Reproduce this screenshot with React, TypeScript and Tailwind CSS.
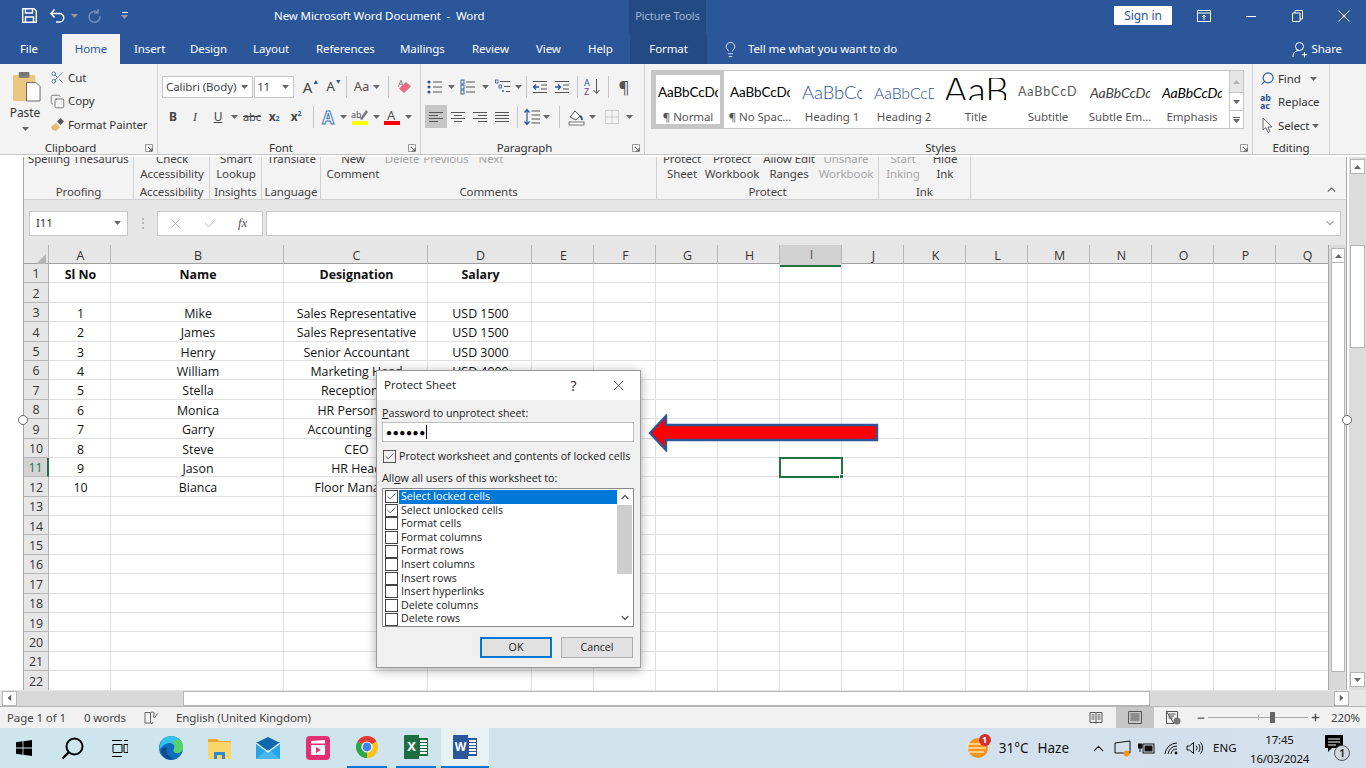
import React from 'react';
import { Check, ChevronDown, ChevronUp, Copy, Lightbulb, Minus, Plus, Scissors, Search, X } from 'lucide-react';

const columns = ['A', 'B', 'C', 'D', 'E', 'F', 'G', 'H', 'I', 'J', 'K', 'L', 'M', 'N', 'O', 'P', 'Q'];
const gridCols = 'grid grid-cols-[25px_62px_173px_144px_104px_62px_62px_62px_62px_62px_62px_62px_62px_62px_62px_62px_62px_62px]';

const sheet: string[][] = [
  ['Sl No', 'Name', 'Designation', 'Salary'],
  [],
  ['1', 'Mike', 'Sales Representative', 'USD 1500'],
  ['2', 'James', 'Sales Representative', 'USD 1500'],
  ['3', 'Henry', 'Senior Accountant', 'USD 3000'],
  ['4', 'William', 'Marketing Head', 'USD 4000'],
  ['5', 'Stella', 'Receptionist', ''],
  ['6', 'Monica', 'HR Personnel', ''],
  ['7', 'Garry', 'Accounting Head', ''],
  ['8', 'Steve', 'CEO', ''],
  ['9', 'Jason', 'HR Head', ''],
  ['10', 'Bianca', 'Floor Manager', ''],
];

const permissions = [
  'Select locked cells',
  'Select unlocked cells',
  'Format cells',
  'Format columns',
  'Format rows',
  'Insert columns',
  'Insert rows',
  'Insert hyperlinks',
  'Delete columns',
  'Delete rows',
];

const styleItems = [
  { sample: 'AaBbCcDdEe', label: '¶ Normal', cls: 'text-[13.5px] text-black', box: 'h-[33px] items-center' },
  { sample: 'AaBbCcDdEe', label: '¶ No Spac...', cls: 'text-[13.5px] text-black', box: 'h-[33px] items-center' },
  { sample: 'AaBbCcDd', label: 'Heading 1', cls: 'text-[18.5px] text-[#2f5496] font-light', box: 'h-[33px] items-center' },
  { sample: 'AaBbCcDd', label: 'Heading 2', cls: 'text-[15.8px] text-[#2f5496] font-light', box: 'h-[33px] items-center' },
  { sample: 'AaB', label: 'Title', cls: 'text-[37px] leading-[37px] translate-y-[8px] inline-block text-black font-light', box: 'h-[22px] mt-[2px] mb-[9px] items-end justify-center' },
  { sample: 'AaBbCcDdEe', label: 'Subtitle', cls: 'text-[12.5px] text-[#595959] tracking-[0.9px]', box: 'h-[33px] items-center' },
  { sample: 'AaBbCcDdEe', label: 'Subtle Em...', cls: 'text-[14px] text-[#404040] italic', box: 'h-[33px] items-center' },
  { sample: 'AaBbCcDdEe', label: 'Emphasis', cls: 'text-[14px] text-black italic', box: 'h-[33px] items-center' },
];

const Caret = ({ className = '' }: { className?: string }) => (
  <svg width="7" height="4" viewBox="0 0 7 4" className={className}>
    <polygon points="0,0 7,0 3.5,4" fill="#666" />
  </svg>
);

const Sep = ({ w = 'w-[8px]' }: { w?: string }) => (
  <div className={`${w} h-[22px] flex justify-center shrink-0`}>
    <div className="w-px h-full bg-[#c6c6c6]" />
  </div>
);

const Slot = ({ w, className = '', children }: { w: string; className?: string; children?: React.ReactNode }) => (
  <div className={`${w} h-[22px] shrink-0 flex items-center justify-center ${className}`}>{children}</div>
);

const Group = ({ w, label, launcher = true, children }: { w: string; label: string; launcher?: boolean; children: React.ReactNode }) => (
  <div className={`${w} h-full shrink-0 flex flex-col border-r border-[#d0d0d0] relative`}>
    <div className="flex-1 min-h-0">{children}</div>
    <div className={`h-[13px] text-center leading-[13px] text-[#333] ${launcher ? 'pr-[16px]' : ''}`}>{label}</div>
    {launcher && (
      <svg width="8" height="8" viewBox="0 0 8 8" className="absolute right-[4px] bottom-[2px]">
        <path d="M0.5 7.5V0.5H7.5V7.5Z" fill="none" stroke="#999" />
        <path d="M3 3L7 7M7 4V7H4" fill="none" stroke="#555" />
      </svg>
    )}
  </div>
);

const Lines = ({ kind }: { kind: 'left' | 'center' | 'right' | 'justify' }) => {
  const spans: Record<string, number[][]> = {
    left: [[1, 15], [1, 10], [1, 15], [1, 10]],
    center: [[1, 15], [4, 12], [1, 15], [4, 12]],
    right: [[1, 15], [6, 15], [1, 15], [6, 15]],
    justify: [[1, 15], [1, 15], [1, 15], [1, 15]],
  };
  return (
    <svg width="16" height="14" viewBox="0 0 16 14">
      {spans[kind].map((s, i) => (
        <line key={i} x1={s[0]} x2={s[1]} y1={2.5 + i * 3} y2={2.5 + i * 3} stroke="#555" />
      ))}
    </svg>
  );
};

const ListIcon = ({ kind }: { kind: 'bullet' | 'number' | 'multi' }) => (
  <svg width="16" height="16" viewBox="0 0 16 16">
    {kind === 'bullet' &&
      [3, 8, 13].map((y) => (
        <g key={y}>
          <circle cx="2" cy={y} r="1.6" fill="#2b579a" />
          <line x1="6" x2="15" y1={y} y2={y} stroke="#555" />
        </g>
      ))}
    {kind === 'number' &&
      [3, 8, 13].map((y) => (
        <g key={y}>
          <rect x="1" y={y - 2} width="3" height="4" fill="none" stroke="#2b579a" strokeWidth="0.9" />
          <line x1="6" x2="15" y1={y} y2={y} stroke="#555" />
        </g>
      ))}
    {kind === 'multi' && (
      <g>
        <rect x="0.5" y="1" width="2.5" height="3" fill="none" stroke="#2b579a" strokeWidth="0.8" />
        <line x1="5" x2="15" y1="2.5" y2="2.5" stroke="#555" />
        <rect x="4" y="6" width="2.5" height="3" fill="none" stroke="#2b579a" strokeWidth="0.8" />
        <line x1="9" x2="15" y1="7.5" y2="7.5" stroke="#555" />
        <circle cx="8" cy="12" r="0.9" fill="#2b579a" />
        <line x1="11" x2="15" y1="12.5" y2="12.5" stroke="#555" />
      </g>
    )}
  </svg>
);

const Indent = ({ out }: { out?: boolean }) => (
  <svg width="16" height="14" viewBox="0 0 16 14">
    {[1.5, 12.5].map((y) => (
      <line key={y} x1="1" x2="15" y1={y} y2={y} stroke="#555" />
    ))}
    <line x1="9" x2="15" y1="5" y2="5" stroke="#555" />
    <line x1="9" x2="15" y1="9" y2="9" stroke="#555" />
    {out ? (
      <path d="M7 7H1.5M4 4.5L1.5 7L4 9.5" fill="none" stroke="#2b579a" strokeWidth="1.3" />
    ) : (
      <path d="M1 7H6.5M4 4.5L6.5 7L4 9.5" fill="none" stroke="#2b579a" strokeWidth="1.3" />
    )}
  </svg>
);

const ClipboardGroup = () => (
  <div className="flex h-full">
    <div className="w-[50px] flex flex-col items-center pt-[7px]">
      <svg width="29" height="31" viewBox="0 0 30 32" className="ml-[3px]">
        <rect x="1" y="4" width="23" height="27" rx="1" fill="#eac681" />
        <rect x="7" y="1" width="11" height="6" rx="1" fill="#777" />
        <path d="M15 12H25L29 16V31H15Z" fill="#fff" stroke="#666" />
      </svg>
      <span className="text-[12px] leading-[16px] mt-[3px] text-[#333]">Paste</span>
      <Caret className="mt-[6px]" />
    </div>
    <div className="flex flex-col pt-[2px] text-[#333]">
      <div className="h-[23px] flex items-center gap-[3px]">
        <Scissors size={15} strokeWidth={1.3} className="text-[#3f6ea5]" />
        <span>Cut</span>
      </div>
      <div className="h-[24px] flex items-center gap-[3px]">
        <Copy size={15} strokeWidth={1.2} className="text-[#555]" />
        <span>Copy</span>
      </div>
      <div className="h-[23px] flex items-center gap-[3px]">
        <svg width="15" height="15" viewBox="0 0 15 15">
          <path d="M1 10L6 6L10 10L6 14L4 13L3 14Z" fill="#e8b96a" />
          <rect x="8" y="2" width="5" height="5" transform="rotate(45 10.5 4.5)" fill="#555" />
        </svg>
        <span>Format Painter</span>
      </div>
    </div>
  </div>
);

const FontGroup = () => (
  <div className="pl-[4px] pt-[12px]">
    <div className="flex items-center h-[22px]">
      <div className="w-[94px] h-[22px] bg-white border border-[#c6c6c6] flex items-center justify-between pl-[3px] pr-[4px] text-[#444]">
        <span>Calibri (Body)</span>
        <Caret />
      </div>
      <div className="w-[41px] h-[22px] ml-px bg-white border border-[#c6c6c6] flex items-center justify-between pl-[2px] pr-[4px] text-[#444]">
        <span>11</span>
        <Caret />
      </div>
      <Slot w="w-[24px]" className="ml-[5px] text-[15px] text-[#444]">
        A<span className="text-[7px] text-[#2b579a] -mt-[10px]">▲</span>
      </Slot>
      <Slot w="w-[22px]" className="text-[13px] text-[#444]">
        A<span className="text-[7px] text-[#2b579a] -mt-[10px]">▼</span>
      </Slot>
      <Sep w="w-[3px]" />
      <Slot w="w-[38px]" className="gap-[4px] text-[13px] text-[#555]">
        Aa
        <Caret />
      </Slot>
      <Sep w="w-[4px]" />
      <Slot w="w-[30px]">
        <svg width="16" height="16" viewBox="0 0 16 16">
          <text x="1" y="8" fontSize="9" fill="#777">A</text>
          <path d="M7 14L2 9.5L9 3L14 7.5Z" fill="#ea6b7e" />
        </svg>
      </Slot>
    </div>
    <div className="flex items-center h-[22px] mt-[8px] text-[#444]">
      <Slot w="w-[22px]" className="font-bold text-[12px]">B</Slot>
      <Slot w="w-[22px]" className="italic text-[12px] font-['Liberation_Serif',serif]">I</Slot>
      <Slot w="w-[24px]" className="underline text-[12px]">U</Slot>
      <Slot w="w-[9px]"><Caret /></Slot>
      <Slot w="w-[26px]" className="line-through text-[11px]">abc</Slot>
      <Slot w="w-[18px]" className="font-bold text-[12px]">x<sub className="text-[7px] text-[#2b579a]">2</sub></Slot>
      <Slot w="w-[26px]" className="font-bold text-[12px]">x<sup className="text-[7px] text-[#2b579a]">2</sup></Slot>
      <Sep w="w-[8px]" />
      <Slot w="w-[22px]" className="text-[17px] leading-none text-white [-webkit-text-stroke:1px_#3f77b5] font-bold">A</Slot>
      <Slot w="w-[9px]"><Caret /></Slot>
      <Slot w="w-[24px]">
        <svg width="18" height="18" viewBox="0 0 18 18">
          <text x="0" y="10" fontSize="9" fill="#555">ab</text>
          <path d="M9 11L15 2L17 4L11 12Z" fill="#777" />
          <rect x="1" y="13" width="16" height="4" fill="#ffff00" />
        </svg>
      </Slot>
      <Slot w="w-[8px]"><Caret /></Slot>
      <Slot w="w-[24px]">
        <svg width="17" height="18" viewBox="0 0 17 18">
          <text x="3" y="12" fontSize="13" fill="#555">A</text>
          <rect x="0" y="13" width="16" height="4" fill="#ff0000" />
        </svg>
      </Slot>
      <Slot w="w-[9px]"><Caret /></Slot>
    </div>
  </div>
);

const ParagraphGroup = () => (
  <div className="pl-[4px] pt-[12px]">
    <div className="flex items-center h-[22px]">
      <Slot w="w-[19px]"><ListIcon kind="bullet" /></Slot>
      <Slot w="w-[14px]"><Caret /></Slot>
      <Slot w="w-[20px]"><ListIcon kind="number" /></Slot>
      <Slot w="w-[14px]"><Caret /></Slot>
      <Slot w="w-[22px]"><ListIcon kind="multi" /></Slot>
      <Slot w="w-[9px]"><Caret /></Slot>
      <Sep w="w-[6px]" />
      <Slot w="w-[22px]"><Indent out /></Slot>
      <Slot w="w-[22px]"><Indent /></Slot>
      <Sep w="w-[9px]" />
      <Slot w="w-[22px]">
        <svg width="18" height="18" viewBox="0 0 18 18">
          <text x="0" y="8" fontSize="9" fill="#2b579a">A</text>
          <text x="0" y="17" fontSize="9" fill="#7a3e9d">Z</text>
          <path d="M12.5 1V15M9.5 12L12.5 15.5L15.5 12" fill="none" stroke="#555" />
        </svg>
      </Slot>
      <Sep w="w-[9px]" />
      <Slot w="w-[22px]" className="text-[17px] text-[#555]">¶</Slot>
    </div>
    <div className="flex items-center h-[23px] mt-[7px]">
      <Slot w="w-[22px]" className="h-[23px] bg-[#c6c6c6]"><Lines kind="left" /></Slot>
      <Slot w="w-[22px]"><Lines kind="center" /></Slot>
      <Slot w="w-[22px]"><Lines kind="right" /></Slot>
      <Slot w="w-[22px]"><Lines kind="justify" /></Slot>
      <Sep />
      <Slot w="w-[21px]">
        <svg width="16" height="18" viewBox="0 0 16 18">
          <path d="M3 2V16M0.5 4.5L3 1.5L5.5 4.5M0.5 13.5L3 16.5L5.5 13.5" fill="none" stroke="#2b579a" strokeWidth="1.2" />
          {[3, 7, 11, 15].map((y) => (
            <line key={y} x1="7.5" x2="16" y1={y} y2={y} stroke="#555" />
          ))}
        </svg>
      </Slot>
      <Slot w="w-[9px]"><Caret /></Slot>
      <Sep w="w-[16px]" />
      <Slot w="w-[18px]">
        <svg width="17" height="18" viewBox="0 0 17 18">
          <path d="M2 9L7 3L12 8L8 12Z" fill="#fff" stroke="#555" />
          <path d="M12 8C14 9 14 11 14 12" fill="none" stroke="#2b579a" strokeWidth="2" />
          <rect x="1" y="14" width="15" height="3" fill="#fff" stroke="#777" />
        </svg>
      </Slot>
      <Slot w="w-[14px]"><Caret /></Slot>
      <Slot w="w-[22px]" className="ml-[2px]">
        <svg width="14" height="14" viewBox="0 0 14 14">
          <path d="M0.5 0.5H13.5V13.5H0.5ZM7 0.5V13.5M0.5 7H13.5" fill="none" stroke="#aaa" strokeDasharray="1 1" />
        </svg>
      </Slot>
      <Slot w="w-[12px]"><Caret /></Slot>
    </div>
  </div>
);

const StylesGroup = () => (
  <div className="pt-[6px]">
    <div className="w-[593px] h-[59px] bg-white border border-[#c6c6c6] flex">
      <div className="flex-1 flex overflow-hidden">
        {styleItems.map((item, i) => (
          <div
            key={item.label}
            className={`w-[72px] shrink-0 h-full flex flex-col items-center ${i === 0 ? 'border-[4px] border-[#c6c6c6] pt-[1px]' : 'pt-[5px] px-[4px]'}`}
          >
            <div className={`w-[60px] shrink-0 overflow-hidden flex font-['Lato',sans-serif] whitespace-nowrap ${item.box}`}>
              <span className={item.cls}>{item.sample}</span>
            </div>
            <div className="leading-[16px] text-[#555] whitespace-nowrap">{item.label}</div>
          </div>
        ))}
      </div>
      <div className="w-[14px] shrink-0 flex flex-col border-l border-[#c6c6c6]">
        <div className="h-[21px] bg-[#e6e6e6] flex items-center justify-center"><Caret className="rotate-180 opacity-40" /></div>
        <div className="h-[19px] border-y border-[#c6c6c6] flex items-center justify-center"><Caret /></div>
        <div className="flex-1 flex flex-col items-center justify-center gap-[1px]">
          <div className="w-[7px] h-px bg-[#666]" />
          <Caret />
        </div>
      </div>
    </div>
  </div>
);

const EditingGroup = () => (
  <div className="pl-[7px] pt-[3px] text-[#333]">
    <div className="h-[23px] flex items-center gap-[3px]">
      <Search size={15} strokeWidth={1.8} className="text-[#2b579a] -scale-x-100" />
      <span>Find</span>
      <Caret className="ml-[6px]" />
    </div>
    <div className="h-[24px] flex items-center gap-[2px]">
      <span className="w-[16px] text-[9px] leading-[8px] font-bold text-[#2b579a]">ab<br />ac</span>
      <span>Replace</span>
    </div>
    <div className="h-[23px] flex items-center gap-[3px]">
      <svg width="15" height="17" viewBox="0 0 15 17">
        <path d="M3 1V13L6 10.5L8 15.5L10 14.5L8 10H12Z" fill="#fff" stroke="#666" />
      </svg>
      <span>Select</span>
      <Caret />
    </div>
  </div>
);

const MiniGroup = ({ w, label, items }: { w: string; label: string; items: { w: string; a: string; b?: string; off?: boolean }[] }) => (
  <div className={`${w} shrink-0 h-full flex flex-col border-r border-[#d0d0d0]`}>
    <div className="h-[27px] flex overflow-hidden">
      {items.map((it) => (
        <div key={it.a} className={`${it.w} shrink-0 flex flex-col items-center -mt-[6px] leading-[15px] ${it.off ? 'text-[#a6a6a6]' : 'text-[#444]'}`}>
          <div>{it.a}</div>
          <div>{it.b}</div>
        </div>
      ))}
    </div>
    <div className="text-center leading-[15px] mt-[1px] text-[#444]">{label}</div>
  </div>
);

const ExcelRibbon = () => (
  <div className="h-[43px] bg-[#f3f3f3] border-b border-[#d0d0d0] flex whitespace-nowrap overflow-hidden">
    <MiniGroup w="w-[110px]" label="Proofing" items={[{ w: 'w-[50px]', a: 'Spelling' }, { w: 'w-[54px]', a: 'Thesaurus' }]} />
    <MiniGroup w="w-[76px]" label="Accessibility" items={[{ w: 'w-[76px]', a: 'Check', b: 'Accessibility' }]} />
    <MiniGroup w="w-[52px]" label="Insights" items={[{ w: 'w-[52px]', a: 'Smart', b: 'Lookup' }]} />
    <MiniGroup w="w-[59px]" label="Language" items={[{ w: 'w-[59px]', a: 'Translate' }]} />
    <MiniGroup
      w="w-[336px]"
      label="Comments"
      items={[
        { w: 'w-[64px]', a: 'New', b: 'Comment' },
        { w: 'w-[34px]', a: 'Delete', off: true },
        { w: 'w-[54px]', a: 'Previous', off: true },
        { w: 'w-[36px]', a: 'Next', off: true },
      ]}
    />
    <MiniGroup
      w="w-[222px]"
      label="Protect"
      items={[
        { w: 'w-[50px]', a: 'Protect', b: 'Sheet' },
        { w: 'w-[50px]', a: 'Protect ', b: 'Workbook' },
        { w: 'w-[64px]', a: 'Allow Edit', b: 'Ranges' },
        { w: 'w-[50px]', a: 'Unshare', b: 'Workbook', off: true },
      ]}
    />
    <MiniGroup
      w="w-[92px]"
      label="Ink"
      items={[
        { w: 'w-[48px]', a: 'Start', b: 'Inking', off: true },
        { w: 'w-[36px]', a: 'Hide', b: 'Ink' },
      ]}
    />
    <div className="flex-1 flex items-end justify-end pr-[8px] pb-[3px]">
      <ChevronUp size={13} strokeWidth={2.5} className="text-[#666]" />
    </div>
  </div>
);

const FormulaBar = () => (
  <div className="h-[45px] bg-[#e6e6e6] flex items-center pl-[5px] pr-[5px] pt-[1px]">
    <div className="w-[99px] h-[25px] bg-white border border-[#c6c6c6] flex items-center justify-between pl-[6px] pr-[6px] text-[#333]">
      <span>I11</span>
      <Caret />
    </div>
    <div className="w-[29px] flex justify-center text-[#999] text-[12px] leading-none">⋮</div>
    <div className="w-[106px] h-[25px] bg-white border border-[#c6c6c6] flex items-center pl-[10px] gap-[20px]">
      <X size={15} strokeWidth={1.3} className="text-[#aaa]" />
      <Check size={15} strokeWidth={1.3} className="text-[#aaa]" />
      <span className="font-['Liberation_Serif',serif] italic text-[13px] text-[#555]">fx</span>
    </div>
    <div className="flex-1 h-[25px] ml-[3px] bg-white border border-[#c6c6c6] flex items-center justify-end pr-[3px]">
      <ChevronDown size={14} strokeWidth={2} className="text-[#aaa]" />
    </div>
  </div>
);

const Sheet = () => (
  <div className="flex-1 min-h-0 flex bg-[#e6e6e6]">
    <div className="w-[1304px] shrink-0 overflow-hidden font-['Open_Sans',sans-serif] text-[12.4px] tracking-normal">
      <div className={`${gridCols} h-[19px] bg-[#e6e6e6] text-[#333] border-b border-[#9f9f9f]`}>
        <div className="border-r border-[#b5b5b5] flex items-end justify-end p-[2px]">
          <div className="w-0 h-0 border-l-[11px] border-l-transparent border-b-[11px] border-b-[#b5b5b5]" />
        </div>
        {columns.map((c) => (
          <div
            key={c}
            className={`border-r border-[#b5b5b5] pl-[2px] pt-[1px] flex items-center justify-center ${c === 'I' ? 'bg-[#d2d2d2] border-b-2 border-b-[#217346] text-[#555]' : ''}`}
          >
            {c}
          </div>
        ))}
      </div>
      {Array.from({ length: 22 }, (_, r) => {
        const row = sheet[r] || [];
        const isActive = r === 10;
        return (
          <div key={r} className={`${gridCols} h-[19.4px] bg-white text-[#111] leading-none`}>
            <div
              className={`border-b border-r border-[#b5b5b5] pt-[3px] flex items-center justify-center ${
                isActive ? 'bg-[#d2d2d2] border-r-2 border-r-[#217346] text-[#217346]' : 'bg-[#e6e6e6] text-[#333]'
              }`}
            >
              {r + 1}
            </div>
            {columns.map((c, i) => (
              <div
                key={c}
                className={`border-b border-r border-[#e0e0e0] pt-[4px] pl-[2px] flex items-center justify-center whitespace-nowrap ${
                  r === 0 ? 'font-bold' : ''
                } ${isActive && c === 'I' ? 'relative outline-2 -outline-offset-1 outline-[#217346]' : ''}`}
              >
                {row[i]}
                {isActive && c === 'I' && (
                  <span className="absolute -right-[3px] -bottom-[3px] w-[5px] h-[5px] bg-[#217346] border border-white" />
                )}
              </div>
            ))}
          </div>
        );
      })}
    </div>
    <div className="w-[3px] shrink-0 bg-[#d9d9d9] border-l border-[#a6a6a6]" />
    <div className="w-[14px] shrink-0 pt-[3px] flex flex-col bg-[#d9d9d9]">
      <div className="h-[15px] bg-white border border-[#b5b5b5] flex items-center justify-center"><Caret className="rotate-180" /></div>
      <div className="h-[409px] bg-white border border-t-0 border-[#b5b5b5]" />
    </div>
  </div>
);

const WordScroll = () => (
  <div className="w-[17px] shrink-0 bg-[#dcdcdc] flex flex-col pl-px pr-px pt-[2px]">
    <div className="h-[15px] bg-white border border-[#b5b5b5] flex items-center justify-center"><Caret className="rotate-180" /></div>
    <div className="h-[71px]" />
    <div className="h-[103px] bg-white border border-[#b5b5b5]" />
    <div className="flex-1" />
    <div className="h-[15px] mb-[3px] bg-white border border-[#b5b5b5] flex items-center justify-center"><Caret /></div>
  </div>
);

const HorizontalScroll = () => (
  <div className="h-[17px] bg-[#e6e6e6] flex items-center pl-[2px] border-b border-[#b5b5b5]">
    <div className="w-[15px] h-[15px] bg-white border border-[#b5b5b5] flex items-center justify-center"><Caret className="rotate-90" /></div>
    <div className="w-[166px] h-[15px] bg-[#d9d9d9]" />
    <div className="w-[967px] h-[15px] bg-white border border-[#b5b5b5]" />
    <div className="w-[184px] h-[15px] bg-[#d9d9d9]" />
    <div className="w-[15px] h-[15px] bg-white border border-[#b5b5b5] flex items-center justify-center"><Caret className="-rotate-90" /></div>
  </div>
);

const StatusBar = () => (
  <div className="h-[21px] bg-[#f1f1f1] flex items-center text-[#444] whitespace-nowrap">
    <span className="ml-[7px] w-[77px]">Page 1 of 1</span>
    <span className="w-[60px]">0 words</span>
    <svg width="14" height="14" viewBox="0 0 14 14">
      <path d="M1 1.5H6.5V12H1ZM6.5 1.5C8 1 9 1 10 1.5V5M6.5 12L8 13L9 11" fill="none" stroke="#666" />
      <path d="M9 5L10.5 7L13.5 2.5" fill="none" stroke="#666" />
    </svg>
    <span className="ml-[18px]">English (United Kingdom)</span>
    <div className="flex-1" />
    <svg width="14" height="13" viewBox="0 0 14 13" className="mr-[13px]">
      <path d="M1 1.5H6.5L7 2.5L7.5 1.5H13V11.5H7.5L7 12.5L6.5 11.5H1ZM7 2.5V12M2.5 4H5.5M2.5 6H5.5M2.5 8H5.5M8.5 4H11.5M8.5 6H11.5M8.5 8H11.5" fill="none" stroke="#555" />
    </svg>
    <div className="w-[38px] h-full bg-[#c6c6c6] flex items-center justify-center">
      <svg width="14" height="13" viewBox="0 0 14 13">
        <path d="M0.5 0.5H13.5V12.5H0.5ZM2.5 3H11.5M2.5 5H11.5M2.5 7H11.5M2.5 9H11.5" fill="none" stroke="#555" />
      </svg>
    </div>
    <svg width="15" height="14" viewBox="0 0 15 14" className="ml-[12px]">
      <path d="M0.5 0.5H11.5V7M8 12.5H0.5V0.5ZM2.5 3H9.5M2.5 5H8M2.5 7H7" fill="none" stroke="#555" />
      <circle cx="11" cy="10" r="3.5" fill="#777" />
    </svg>
    <Minus size={10} strokeWidth={3} className="ml-[15px] text-[#555]" />
    <div className="ml-[2px] w-[100px] h-[9px] relative flex items-center">
      <div className="w-full h-px bg-[#aaa]" />
      <div className="absolute left-[50px] w-px h-[5px] bg-[#aaa]" />
      <div className="absolute left-[62px] w-[5px] h-[11px] bg-[#666]" />
    </div>
    <Plus size={11} strokeWidth={3} className="ml-[2px] text-[#555]" />
    <span className="ml-[10px] w-[35px]">220%</span>
  </div>
);

const TaskIcon = ({ w, active, children }: { w: string; active?: boolean; children: React.ReactNode }) => (
  <div className={`${w} h-full shrink-0 flex items-center justify-center border-b-[2px] border-[#0078d7] ${active ? 'bg-white/50' : ''}`}>
    {children}
  </div>
);

const Taskbar = () => (
  <div className="h-[40px] bg-gradient-to-r from-[#cde6ee] to-[#d4dfec] flex items-center text-[#111] whitespace-nowrap tracking-normal">
    <div className="w-[48px] flex justify-center">
      <svg width="16" height="16" viewBox="0 0 16 16">
        <path d="M0 2.2L6.6 1.3V7.6H0ZM7.4 1.2L16 0V7.6H7.4ZM0 8.4H6.6V14.7L0 13.8ZM7.4 8.4H16V16L7.4 14.8Z" fill="#000" />
      </svg>
    </div>
    <div className="w-[48px] flex justify-center">
      <svg width="23" height="23" viewBox="0 0 23 23">
        <circle cx="13.5" cy="9.5" r="8" fill="none" stroke="#000" strokeWidth="2" />
        <line x1="8" y1="15" x2="1.5" y2="21.5" stroke="#000" strokeWidth="2.4" />
      </svg>
    </div>
    <div className="w-[48px] flex justify-center">
      <svg width="16" height="17" viewBox="0 0 16 17">
        <path d="M0 0.5H10M0 16.5H10M12 0.5H16M1 4.5H10V12.5H1ZM12 4.5H16V12.5H12Z" fill="none" stroke="#000" />
      </svg>
    </div>
    <div className="w-[47px] flex justify-center ml-[3px]">
      <svg width="24" height="24" viewBox="0 0 24 24">
        <circle cx="12" cy="12" r="12" fill="#0c6fbd" />
        <path d="M12 0C19 0 24 5 24 12C24 15 21 17 18 17C15 17 14 15 15 13C17 9 12 6 8 7.5C5 8.5 2 11 0.5 14C0 6 5 0 12 0Z" fill="#35c1f1" />
        <path d="M22 4.5C24 8 24 12 24 12C24 15 21 17 18 17C15 17 14 15 15 13C17 11 15 8 13 7C17 3 20 3 22 4.5Z" fill="#54d36a" />
        <path d="M8 12C6 16 9 21 15 23C9 25 3 21 2 15C3 12 6 10 8 12Z" fill="#114a8b" />
      </svg>
    </div>
    <div className="w-[49px] ml-px flex justify-center">
      <svg width="23" height="21" viewBox="0 0 23 21">
        <path d="M0 1H9L11 3H23V6H0Z" fill="#e6a92e" />
        <rect y="4" width="23" height="17" rx="1" fill="#fbd56b" />
        <path d="M6 14H17V21H14V17H9V21H6Z" fill="#2f88d6" />
      </svg>
    </div>
    <div className="w-[48px] flex justify-center">
      <svg width="24" height="22" viewBox="0 0 24 22">
        <rect y="5" width="24" height="17" fill="#29a3e3" />
        <path d="M0 6L12 0L24 6L12 14Z" fill="#0f67ac" />
        <path d="M0 22L12 12L24 22Z" fill="#45b6ee" />
        <path d="M0 6L12 15L24 6" fill="none" stroke="#fff" strokeWidth="1.2" />
      </svg>
    </div>
    <div className="w-[49px] ml-px flex justify-center">
      <svg width="24" height="24" viewBox="0 0 24 24">
        <rect width="24" height="24" rx="4" fill="#e42f74" />
        <rect x="5" y="9" width="14" height="10" rx="1" fill="#fff" />
        <path d="M5 5L19 4V7.5H5Z" fill="#fff" />
        <path d="M10 11V17L15 14Z" fill="#e42f74" />
      </svg>
    </div>
    <div className="ml-[5px]" />
    <TaskIcon w="w-[40px]">
      <svg width="24" height="24" viewBox="0 0 24 24">
        <path d="M12 12L2.47 6.5A11 11 0 0 1 21.53 6.5Z" fill="#e33b2e" />
        <path d="M12 12L21.53 6.5A11 11 0 0 1 12 23Z" fill="#fbc116" />
        <path d="M12 12L12 23A11 11 0 0 1 2.47 6.5Z" fill="#2ea64a" />
        <circle cx="12" cy="12" r="5.6" fill="#fff" />
        <circle cx="12" cy="12" r="4.4" fill="#3b82f0" />
      </svg>
    </TaskIcon>
    <div className="ml-[9px]" />
    <TaskIcon w="w-[40px]">
      <div className="flex items-center h-[24px]">
        <div className="w-[15px] h-[24px] bg-[#1d6f42] text-white font-bold text-[13px] flex items-center justify-center rounded-l-[1px]">X</div>
        <div className="w-[9px] h-[18px] border border-[#1d6f42] bg-[repeating-linear-gradient(0deg,#1d6f42_0px,#1d6f42_1px,#fff_1px,#fff_3px)]" />
      </div>
    </TaskIcon>
    <div className="ml-[5px]" />
    <TaskIcon w="w-[48px]" active>
      <div className="flex items-center h-[24px]">
        <div className="w-[15px] h-[24px] bg-[#2b579a] text-white font-bold text-[12px] flex items-center justify-center rounded-l-[1px]">W</div>
        <div className="w-[9px] h-[18px] border border-[#2b579a] bg-[repeating-linear-gradient(0deg,#2b579a_0px,#2b579a_1px,#fff_1px,#fff_3px)]" />
      </div>
    </TaskIcon>
    <div className="flex-1" />
    <div className="relative w-[24px] h-[24px] mr-[9px]">
      <svg width="24" height="24" viewBox="0 0 24 24">
        <circle cx="12" cy="12" r="10" fill="#f7941d" />
        <path d="M0 8H16M1 12H20M3 16H18" stroke="#fde3a7" strokeWidth="1.6" />
      </svg>
      <span className="absolute -top-[2px] -right-[1px] w-[12px] h-[12px] rounded-full bg-[#d32f2f] text-white text-[9px] leading-[12px] text-center font-bold">1</span>
    </div>
    <span className="text-[13.5px] mr-[9px]">31°C</span>
    <span className="text-[13.5px] mr-[21px]">Haze</span>
    <ChevronUp size={17} strokeWidth={1.5} className="mr-[7px]" />
    <svg width="17" height="17" viewBox="0 0 17 17" className="mr-[7px]">
      <path d="M1 3L16 1V13H1Z" fill="none" stroke="#111" />
      <circle cx="12.5" cy="13.5" r="3" fill="#f7931e" />
    </svg>
    <svg width="17" height="12" viewBox="0 0 17 12" className="mr-[9px]">
      <rect x="5" y="2" width="11" height="9" fill="none" stroke="#111" />
      <rect x="6.5" y="3.5" width="8" height="6" fill="#111" />
      <path d="M0 2H4V6H0ZM2 6V10" fill="#111" stroke="#111" />
    </svg>
    <svg width="15" height="13" viewBox="0 0 15 13" className="mr-[7px]">
      <path d="M1 12A12 12 0 0 1 13 1M4 12A9 9 0 0 1 13 4M7 12A6 6 0 0 1 13 7" fill="none" stroke="#111" />
      <circle cx="12" cy="11" r="1.4" fill="#111" />
    </svg>
    <svg width="17" height="14" viewBox="0 0 17 14" className="mr-[10px]">
      <path d="M1 5H3.5L7.5 1.5V12.5L3.5 9H1Z" fill="none" stroke="#111" />
      <path d="M10 4.5A3.5 3.5 0 0 1 10 9.5M12.5 3A6 6 0 0 1 12.5 11M14.5 1.5A8 8 0 0 1 14.5 12.5" fill="none" stroke="#111" />
    </svg>
    <span className="text-[11.5px] w-[23px] mr-[14px]">ENG</span>
    <div className="w-[59px] text-center text-[11.5px] tracking-[-0.2px] leading-[19px] pt-[1px]">
      <div>17:45</div>
      <div>16/03/2024</div>
    </div>
    <div className="relative w-[25px] h-[26px] ml-[16px] mr-[16px]">
      <svg width="18" height="18" viewBox="0 0 18 18">
        <path d="M0 0H18V13H7L3 17V13H0Z" fill="#000" />
        <path d="M3 4H15M3 7H15M3 10H11" stroke="#fff" />
      </svg>
      <span className="absolute right-0 bottom-0 w-[16px] h-[16px] rounded-full bg-[#d0d8e2] border border-[#555] text-[10px] leading-[14px] text-center font-bold text-[#333]">1</span>
    </div>
  </div>
);

const ProtectDialog = () => (
  <div className="absolute left-[376px] top-[370px] w-[265px] h-[298px] bg-[#f0f0f0] border border-[#9a9a9a] shadow-[0_2px_10px_rgba(0,0,0,0.35)] text-[10.7px] tracking-normal text-[#222] font-['Open_Sans',sans-serif] whitespace-nowrap">
    <div className="h-[29px] bg-white flex items-center pl-[7px] text-[11.5px] pb-[1px]">
      <span className="flex-1">Protect Sheet</span>
      <span className="text-[14px] w-[45px] text-center mr-[14px]">?</span>
      <X size={17} strokeWidth={1.1} className="mr-[13px]" />
    </div>
    <div className="pl-[5px] pr-[6px]">
      <div className="h-[15px] mt-[6px] leading-[15px]"><u>P</u>assword to unprotect sheet:</div>
      <div className="h-[20px] mt-[1px] bg-white border border-[#bfbfbf] flex items-center pl-[3px]">
        <span className="text-[10px] tracking-[0.6px] text-black">●●●●●●</span>
        <span className="w-px h-[14px] bg-black" />
      </div>
      <div className="flex items-center mt-[7px] h-[14px]">
        <div className="w-[13px] h-[13px] bg-[#f0f0f0] border border-[#555] flex items-center justify-center ml-px">
          <Check size={11} strokeWidth={1.6} className="text-[#333]" />
        </div>
        <span className="ml-[3px]">Protect worksheet and <u>c</u>ontents of locked cells</span>
      </div>
      <div className="h-[15px] mt-[8px] leading-[15px]">All<u>o</u>w all users of this worksheet to:</div>
      <div className="h-[139px] mt-[2px] bg-white border border-[#8a8a8a] flex">
        <div className="flex-1 pt-[1px] pl-[2px] overflow-hidden">
          {permissions.map((p, i) => (
            <div key={p} className="h-[13.6px] flex items-center">
              <div className="w-[13px] h-[13px] bg-white border border-[#444] flex items-center justify-center shrink-0">
                {i < 2 && <Check size={11} strokeWidth={1.6} className="text-[#333]" />}
              </div>
              <span className={`h-[13.6px] leading-[13px] flex-1 pl-[2px] ml-px ${i === 0 ? 'bg-[#0078d7] text-white' : ''}`}>{p}</span>
            </div>
          ))}
        </div>
        <div className="w-[15px] shrink-0 mr-px flex flex-col items-center">
          <div className="h-[16px] flex items-center"><ChevronUp size={12} strokeWidth={2.4} className="text-[#555]" /></div>
          <div className="w-full h-[69px] bg-[#cdcdcd]" />
          <div className="flex-1" />
          <div className="h-[16px] flex items-center"><ChevronDown size={12} strokeWidth={2.4} className="text-[#555]" /></div>
        </div>
      </div>
      <div className="flex justify-end gap-[9px] mt-[10px] mr-px">
        <div className="w-[72px] h-[21px] bg-[#e1e1e1] border-2 border-[#0078d7] flex items-center justify-center">OK</div>
        <div className="w-[72px] h-[21px] bg-[#e1e1e1] border border-[#adadad] flex items-center justify-center">Cancel</div>
      </div>
    </div>
  </div>
);

const tabs = [
  { label: 'Insert', w: 'w-[56px]' },
  { label: 'Design', w: 'w-[63px]' },
  { label: 'Layout', w: 'w-[63px]' },
  { label: 'References', w: 'w-[84px]' },
  { label: 'Mailings', w: 'w-[72px]' },
  { label: 'Review', w: 'w-[64px]' },
  { label: 'View', w: 'w-[52px]' },
  { label: 'Help', w: 'w-[42px]' },
];

const App: React.FC = () => {
  return (
    <div className="relative w-[1366px] h-[768px] overflow-hidden bg-white flex flex-col text-[11.5px] tracking-[-0.1px] font-['Noto_Sans',sans-serif]">
      {/* title bar */}
      <div className="h-[34px] shrink-0 bg-[#2b579a] flex items-center text-white whitespace-nowrap">
        <div className="w-[629px] flex items-center h-full pb-[3px]">
          <svg width="15" height="15" viewBox="0 0 15 15" className="ml-[22px]">
            <path d="M0.7 0.7H12L14.3 3V14.3H0.7Z" fill="none" stroke="#fff" strokeWidth="1.4" />
            <path d="M3.5 1V5H10.5V1M3.5 14V9H11.5V14" fill="none" stroke="#fff" strokeWidth="1.4" />
          </svg>
          <svg width="15" height="15" viewBox="0 0 15 15" className="ml-[13px]">
            <path d="M1 5.5H9.5A4.2 4.2 0 0 1 9.5 14H6M4.5 1.5L1 5.5L4.5 9.5" fill="none" stroke="#fff" strokeWidth="1.5" />
          </svg>
          <Caret className="ml-[6px] invert" />
          <svg width="15" height="15" viewBox="0 0 15 15" className="ml-[9px] opacity-40">
            <path d="M11 1V5H7M11 4.5A5.5 5.5 0 1 0 13 8" fill="none" stroke="#cfd9ea" strokeWidth="1.5" />
          </svg>
          <div className="ml-[19px] flex flex-col items-center gap-[2px]">
            <div className="w-[6px] h-px bg-white" />
            <Caret className="invert" />
          </div>
          <span className="ml-[146px] whitespace-pre">New Microsoft Word Document  -  Word</span>
        </div>
        <div className="w-[77px] h-full pb-[2px] bg-[#234a83] flex items-center justify-center text-[#9fb6d6] text-[11px]">Picture Tools</div>
        <div className="flex-1 flex items-center h-full pb-[3px]">
          <div className="ml-[408px] w-[58px] h-[19px] bg-white text-[#2b579a] text-center text-[12px] leading-[19px]">Sign in</div>
          <svg width="14" height="12" viewBox="0 0 14 12" className="ml-[25px]">
            <path d="M0.5 0.5H13.5V11.5H0.5ZM0.5 3H13.5M7 10V5M5 7L7 5L9 7" fill="none" stroke="#fff" />
          </svg>
          <svg width="10" height="10" viewBox="0 0 10 10" className="ml-[35px]">
            <line x1="0" x2="10" y1="5.5" y2="5.5" stroke="#fff" />
          </svg>
          <svg width="11" height="12" viewBox="0 0 11 12" className="ml-[36px]">
            <path d="M0.5 3H8V11.5H0.5ZM3 3V0.5H10.5V9H8" fill="none" stroke="#fff" />
          </svg>
          <svg width="12" height="12" viewBox="0 0 12 12" className="ml-[35px]">
            <path d="M0.5 0.5L11.5 11.5M11.5 0.5L0.5 11.5" fill="none" stroke="#fff" />
          </svg>
        </div>
      </div>

      {/* tabs */}
      <div className="h-[30px] shrink-0 bg-[#2b579a] flex items-center text-white whitespace-nowrap">
        <span className="ml-[20px]">File</span>
        <div className="ml-[24px] w-[58px] h-full bg-[#f3f3f3] text-[#2b579a] flex items-center justify-center">Home</div>
        <div className="ml-[14px] flex">
          {tabs.map((t) => (
            <span key={t.label} className={t.w}>{t.label}</span>
          ))}
        </div>
        <div className="w-[77px] h-full bg-[#234a83] flex items-center justify-center">Format</div>
        <Lightbulb size={17} strokeWidth={1.1} className="ml-[15px]" />
        <span className="ml-[9px]">Tell me what you want to do</span>
        <div className="flex-1" />
        <svg width="17" height="17" viewBox="0 0 17 17">
          <circle cx="7.5" cy="5.5" r="4" fill="none" stroke="#fff" />
          <path d="M1 16C1 11 4 9.5 7.5 9.5M12.5 11V16.5M10 13.7H15.2" fill="none" stroke="#fff" />
        </svg>
        <span className="ml-[3px] mr-[24px]">Share</span>
      </div>

      {/* word ribbon */}
      <div className="h-[91px] shrink-0 bg-[#f3f3f3] border-b border-[#c6c6c6] flex whitespace-nowrap">
        <Group w="w-[158px]" label="Clipboard"><ClipboardGroup /></Group>
        <Group w="w-[263px]" label="Font"><FontGroup /></Group>
        <Group w="w-[224px]" label="Paragraph"><ParagraphGroup /></Group>
        <Group w="w-[608px]" label="Styles"><div className="pl-[6px]"><StylesGroup /></div></Group>
        <Group w="w-[77px]" label="Editing" launcher={false}><EditingGroup /></Group>
      </div>

      {/* document with the embedded sheet */}
      <div className="h-[533px] shrink-0 mt-[2px] flex bg-white">
        <div className="w-[23px] shrink-0" />
        <div className="w-[1324px] shrink-0 flex flex-col border-x border-[#a6a6a6]">
          <ExcelRibbon />
          <FormulaBar />
          <Sheet />
        </div>
        <div className="w-[2px] shrink-0" />
        <WordScroll />
      </div>
      <HorizontalScroll />
      <StatusBar />
      <Taskbar />

      {/* object handles */}
      <span className="absolute left-[18px] top-[415px] w-[10px] h-[10px] rounded-full bg-white border border-[#666]" />
      <span className="absolute left-[1342px] top-[415px] w-[10px] h-[10px] rounded-full bg-white border border-[#666]" />

      <svg width="232" height="38" viewBox="0 0 232 38" className="absolute left-[648px] top-[414px]">
        <polygon points="2,19 18,2 18,11 229,11 229,26 18,26 18,36" fill="#ff0000" stroke="#2f5597" strokeWidth="2.4" />
      </svg>

      <ProtectDialog />
    </div>
  );
};

export default App;
